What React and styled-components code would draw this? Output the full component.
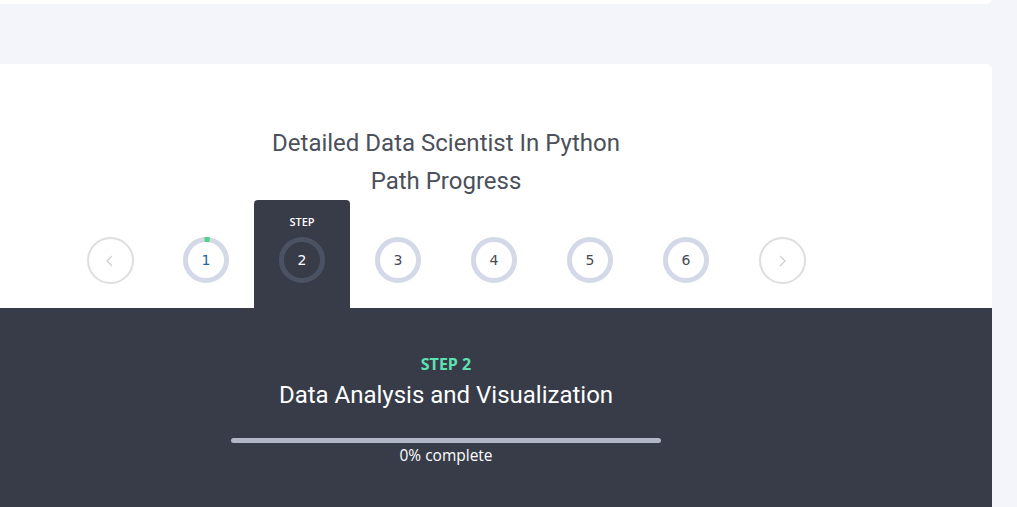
import React from "react";
import styled, { createGlobalStyle } from "styled-components";

const GlobalStyle = createGlobalStyle`
	html, body {
		margin: 0;
		padding: 0;
		background-color: #f4f5fa;
		font-family: "Open Sans", "Liberation Sans", sans-serif;
		overflow: hidden;
	}
`;

const Page = styled.div`
	width: 1017px;
	height: 507px;
	overflow: hidden;
`;

const TopCard = styled.div`
	width: 992px;
	height: 20px;
	margin-top: -16px;
	background-color: #ffffff;
	border-bottom-right-radius: 6px;
`;

const Card = styled.section`
	width: 992px;
	margin-top: 60px;
	background-color: #ffffff;
	border-top-right-radius: 6px;
	overflow: hidden;
`;

const Header = styled.div`
	padding: 60px 100px 0 0;
	display: flex;
	justify-content: center;
`;

const Title = styled.h1`
	margin: 0;
	font-family: Roboto, "Liberation Sans", sans-serif;
	font-weight: 400;
	font-size: 24px;
	line-height: 38px;
	color: #4b505b;
	text-align: center;
`;

const Stepper = styled.div`
	display: flex;
	justify-content: center;
	padding-right: 100px;
`;

const Slot = styled.div`
	width: 96px;
	height: 108px;
	box-sizing: border-box;
	padding-top: 14px;
	display: flex;
	flex-direction: column;
	align-items: center;
	background-color: ${(p) => (p.$active ? "#373c48" : "transparent")};
	border-radius: 4px 4px 0 0;
`;

const SlotLabel = styled.div`
	height: 16px;
	line-height: 16px;
	font-size: 11px;
	font-weight: 600;
	color: #ffffff;
	visibility: ${(p) => (p.$show ? "visible" : "hidden")};
`;

const StepCircle = styled.div`
	position: relative;
	margin-top: 7px;
	width: 46px;
	height: 46px;
	display: flex;
	align-items: center;
	justify-content: center;

	svg {
		position: absolute;
		inset: 0;
	}
`;

const StepNumber = styled.span`
	position: relative;
	font-family: "DejaVu Sans", sans-serif;
	font-size: 14px;
	color: ${(p) => p.$color};
`;

const NavButton = styled.button`
	margin-top: 23px;
	width: 47px;
	height: 47px;
	padding: 0;
	box-sizing: border-box;
	border: 2px solid #dedede;
	border-radius: 50%;
	background: #ffffff;
	display: flex;
	align-items: center;
	justify-content: center;
	cursor: pointer;
`;

const Detail = styled.div`
	background-color: #373c48;
	padding: 46px 100px 60px 0;
	display: flex;
	flex-direction: column;
	align-items: center;
`;

const StepTag = styled.div`
	font-size: 16px;
	line-height: 20px;
	font-weight: 700;
	color: #5ee2b4;
`;

const StepTitle = styled.h2`
	margin: 6px 0 0;
	font-family: Roboto, "Liberation Sans", sans-serif;
	font-weight: 400;
	font-size: 24px;
	line-height: 30px;
	color: #ffffff;
`;

const Bar = styled.div`
	margin-top: 28px;
	width: 430px;
	height: 5px;
	border-radius: 3px;
	background-color: #b2b7c7;
`;

const BarFill = styled.div`
	height: 100%;
	border-radius: 3px;
	background-color: #5ee2b4;
`;

const Complete = styled.div`
	margin-top: 1px;
	font-size: 15.5px;
	line-height: 22px;
	color: #ffffff;
`;

const Ring = ({ active, progress }) => {
	const r = 20.5;
	const c = 2 * Math.PI * r;
	return (
		<svg width="46" height="46" viewBox="0 0 46 46">
			<circle cx="23" cy="23" r={r} fill="none" stroke={active ? "#4b5263" : "#d3d9e6"} strokeWidth="5" />
			{progress > 0 && (
				<circle
					cx="23"
					cy="23"
					r={r}
					fill="none"
					stroke="#4fd28a"
					strokeWidth="5"
					strokeDasharray={`${c * progress} ${c}`}
					transform="rotate(-94 23 23)"
				/>
			)}
		</svg>
	);
};

const Chevron = ({ dir }) => (
	<svg width="14" height="14" viewBox="0 0 14 14" fill="none" stroke="#cfcfcf" strokeWidth="1.3">
		{dir === "left" ? <path d="M9 2 L4 7 L9 12" /> : <path d="M5 2 L10 7 L5 12" />}
	</svg>
);

const steps = [
	{ n: 1, progress: 0.04 },
	{ n: 2, progress: 0 },
	{ n: 3, progress: 0 },
	{ n: 4, progress: 0 },
	{ n: 5, progress: 0 },
	{ n: 6, progress: 0 },
];

const App = () => {
	const current = 2;
	const percent = 0;
	return (
		<Page>
			<GlobalStyle />
			<TopCard />
			<Card>
				<Header>
					<Title>
						Detailed Data Scientist In Python
						<br />
						Path Progress
					</Title>
				</Header>
				<Stepper>
					<Slot>
						<NavButton aria-label="previous">
							<Chevron dir="left" />
						</NavButton>
					</Slot>
					{steps.map((s) => {
						const active = s.n === current;
						return (
							<Slot key={s.n} $active={active}>
								<SlotLabel $show={active}>STEP</SlotLabel>
								<StepCircle>
									<Ring active={active} progress={s.progress} />
									<StepNumber $color={active ? "#ffffff" : s.n === 1 ? "#1d63a8" : "#444a56"}>
										{s.n}
									</StepNumber>
								</StepCircle>
							</Slot>
						);
					})}
					<Slot>
						<NavButton aria-label="next">
							<Chevron dir="right" />
						</NavButton>
					</Slot>
				</Stepper>
				<Detail>
					<StepTag>STEP {current}</StepTag>
					<StepTitle>Data Analysis and Visualization</StepTitle>
					<Bar>
						<BarFill style={{ width: `${percent}%` }} />
					</Bar>
					<Complete>{percent}% complete</Complete>
				</Detail>
			</Card>
		</Page>
	);
};

export default App;
